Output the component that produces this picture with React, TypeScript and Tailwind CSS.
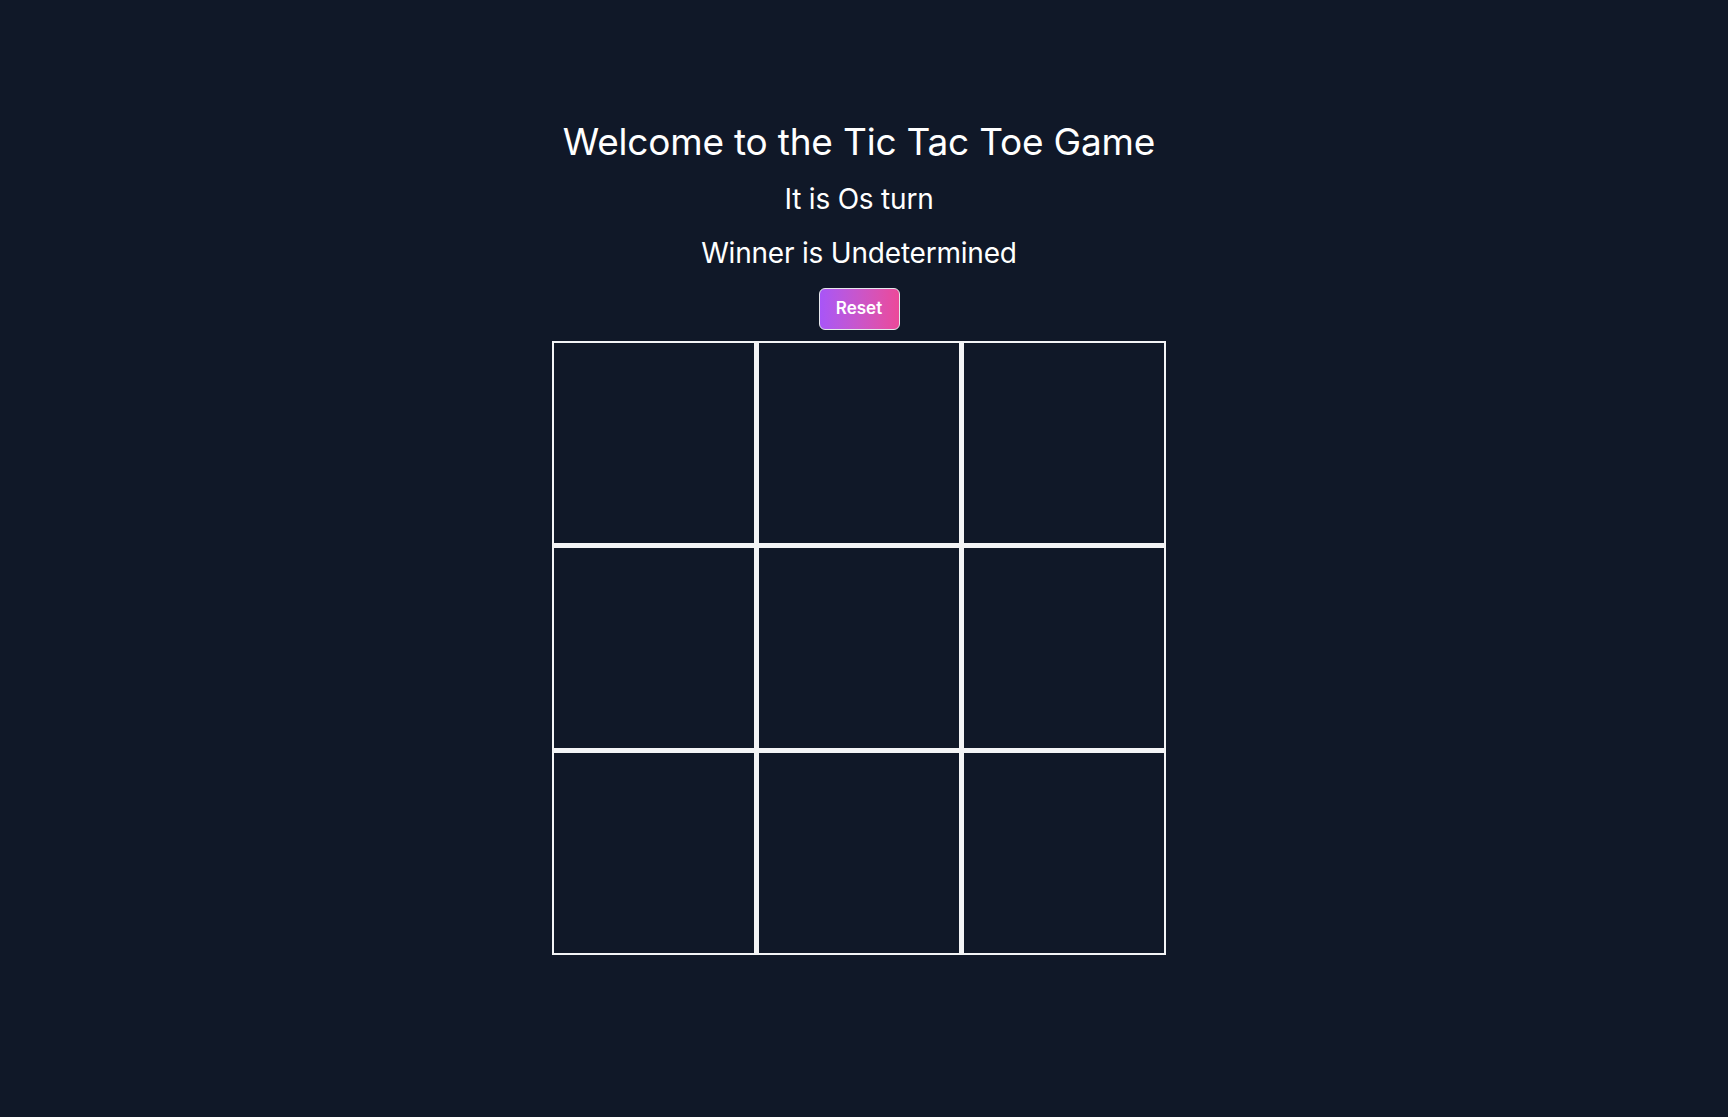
import { useState } from 'react';

type Cell = 'X' | 'O' | null;

const lines = [
  [0, 1, 2], [3, 4, 5], [6, 7, 8],
  [0, 3, 6], [1, 4, 7], [2, 5, 8],
  [0, 4, 8], [2, 4, 6],
];

const getWinner = (b: Cell[]) => {
  for (const [a, c, d] of lines) {
    if (b[a] && b[a] === b[c] && b[a] === b[d]) return b[a];
  }
  return null;
};

export default function App() {
  const [board, setBoard] = useState<Cell[]>(Array(9).fill(null));
  const [turn, setTurn] = useState<'X' | 'O'>('O');
  const winner = getWinner(board);

  const play = (i: number) => {
    if (board[i] || winner) return;
    const next = [...board];
    next[i] = turn;
    setBoard(next);
    setTurn(turn === 'O' ? 'X' : 'O');
  };

  const reset = () => {
    setBoard(Array(9).fill(null));
    setTurn('O');
  };

  return (
    <div className="min-h-screen w-full bg-[#101828] text-white font-['Inter',sans-serif]">
      <div className="flex flex-col items-center pt-[120px] mr-[10px]">
        <h1 className="text-[37px] leading-[44px] tracking-[-0.2px]">Welcome to the Tic Tac Toe Game</h1>
        <p className="mt-[17px] text-[28px] leading-[36px] tracking-[-0.2px]">It is {turn}s turn</p>
        <p className="mt-[18px] text-[28px] leading-[36px] tracking-[-0.2px]">Winner is {winner ?? 'Undetermined'}</p>
        <button
          onClick={reset}
          className="mt-[17px] w-[81px] h-[42px] rounded-md border border-gray-200 bg-gradient-to-r from-[#a855f7] to-[#ec4899] text-[17px] font-semibold text-white"
        >
          Reset
        </button>
        <div className="mt-[11px] grid grid-cols-3 gap-px bg-gray-100 w-[614px]">
          {board.map((c, i) => (
            <button
              key={i}
              onClick={() => play(i)}
              className="h-[204px] border-2 border-gray-100 bg-[#101828] text-7xl"
            >
              {c}
            </button>
          ))}
        </div>
      </div>
    </div>
  );
}
